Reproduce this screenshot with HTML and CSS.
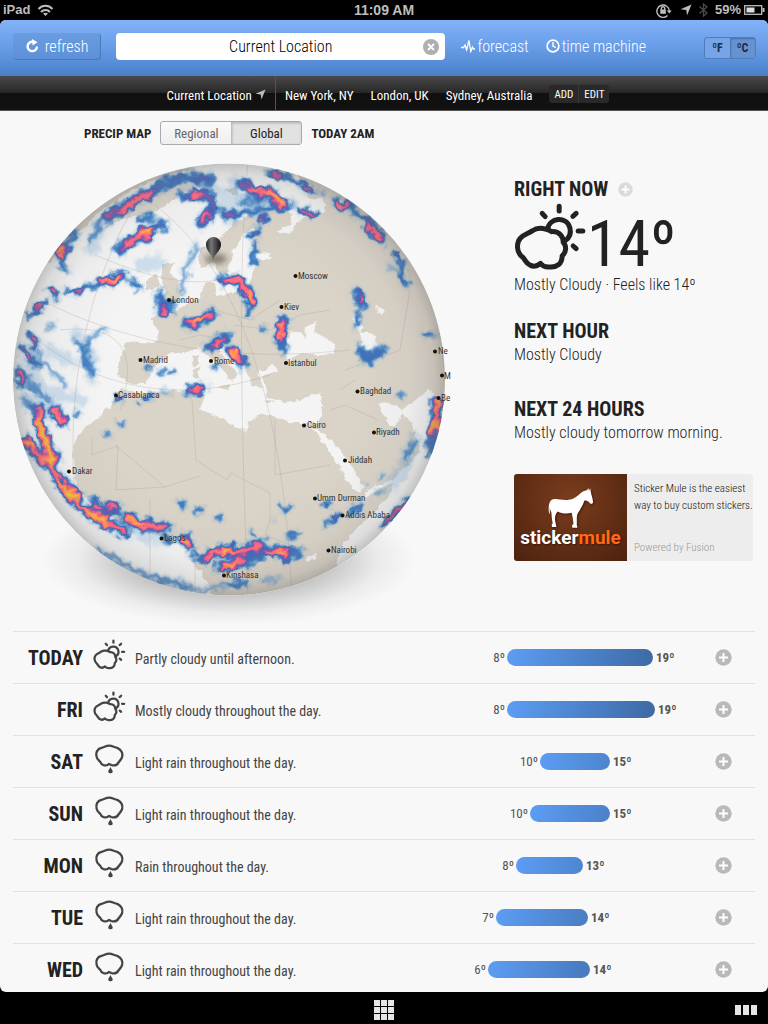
FILE: index.html
```html
<!DOCTYPE html>
<html lang="en">
<head>
<meta charset="utf-8">
<meta name="viewport" content="width=device-width, initial-scale=1">
<title>Forecast</title>
<link rel="stylesheet" href="styles.css">
</head>
<body>
<svg class="sprite" aria-hidden="true">
  <symbol id="partly" viewBox="40 98 218 204">
    <path d="M97 180C112 168 142 176 152 184C176 182 188 200 187 216C199 228 195 248 184 256C184 282 166 292 146 290C134 291 124 286 119 279C108 289 96 289 87 284C76 280 74 270 67 262C44 246 48 216 58 204C68 192 84 190 97 180Z"/>
    <path d="M140 176C146 142 196 136 207 172C212 190 204 204 192 212"/>
    <path d="M175 108v14M124 129l9 10M226 129l-10 9M232 182h14M217 227l9 8"/>
  </symbol>
  <symbol id="rain" viewBox="280 352 96 96">
    <path d="M303 367C311 366 317 360 327 360C337 360 343 366 352 367C366 373 370 386 367 396C364 405 359 407 356 412C351 422 342 423 333 420C329 418 326 415 324 419C316 424 303 422 299 410C294 405 289 402 288 394C285 382 290 370 303 367Z"/>
    <path class="drop" d="M331 426C333 432 338 435 338 440A7 6 0 0 1 324 440C324 435 329 432 331 426Z"/>
  </symbol>
  <symbol id="plus" viewBox="0 0 17 17">
    <circle cx="8.500" cy="8.500" r="8.200" stroke="none"/><path d="M8.500 4v9M4 8.500h9"/>
  </symbol>
  <symbol id="arrow" viewBox="0 0 12 12"><path d="M11.500 .5L7 11.500L6.300 6L.5 5.300Z"/></symbol>
</svg>

<div class="status">
  <span class="status-side">iPad
    <svg width="17" height="13" viewBox="0 0 17 13" fill="none" stroke="currentColor" stroke-width="2"><path d="M1.500 5C5.500 .8 11.500 .8 15.500 5M4 8C6.500 5.200 10.500 5.200 13 8"/><path d="M8.500 12L6 9.600C7.500 8.300 9.500 8.300 11 9.600Z" fill="currentColor" stroke="none"/></svg>
  </span>
  <span>11:09 AM</span>
  <span class="status-side end">
    <svg width="17" height="15" viewBox="0 0 17 15" fill="none" stroke="currentColor" stroke-width="1.400"><path d="M11.500 12.600A6.200 6.200 0 1 1 13.300 8"/><path d="M10.800 7.500h5l-2.500 3z" fill="currentColor" stroke="none"/><rect x="4.300" y="6.500" width="5.500" height="4.300" fill="currentColor" stroke="none"/><path d="M5.300 7V5.500a1.750 1.750 0 0 1 3.500 0V7"/></svg>
    <svg class="nav" width="12" height="12"><use href="#arrow"/></svg>
    <svg width="9" height="14" viewBox="0 0 9 14" fill="none" stroke="#4a4a4a" stroke-width="1.300"><path d="M.5 3.500L8 10L4.500 13V1L8 4L.5 10.500"/></svg>
    <span class="pct">59%</span>
    <svg class="battery" width="21" height="10" viewBox="0 0 21 10"><rect x=".7" y=".7" width="17" height="8.600" fill="none" stroke="currentColor" stroke-width="1.300"/><path d="M18.500 3h2v4h-2z" fill="currentColor"/><path d="M2.500 2.500h8v5h-8z" fill="#ddd"/></svg>
  </span>
</div>

<div class="app">
  <header class="toolbar">
    <button class="refresh" type="button">
      <svg width="13" height="14" viewBox="0 0 13 14"><path d="M7 2.800A4.700 4.700 0 1 0 11 7.500" fill="none" stroke="#fff" stroke-width="2.400"/><path d="M6 0l5.500 3.200L6.500 6.500z" fill="#fff"/></svg>refresh
    </button>
    <div class="search">
      <input type="text" value="Current Location" aria-label="Location">
      <button type="button" aria-label="Clear"><svg width="16" height="16" viewBox="0 0 16 16"><circle cx="8" cy="8" r="8" fill="#afafaf"/><path d="M5 5l6 6M11 5l-6 6" stroke="#fff" stroke-width="1.800"/></svg></button>
    </div>
    <nav class="modes">
      <a href="#forecast"><svg width="14" height="14" viewBox="0 0 14 14" fill="none" stroke="#fff" stroke-width="1.300"><path d="M0 8.500h2.500L4 6l1.600 5L8 1.500l1.800 11L11.500 8l1 2H14"/></svg>forecast</a>
      <a href="#time"><svg width="14" height="14" viewBox="0 0 14 14" fill="none" stroke="#fff"><circle cx="7" cy="7" r="5.900" stroke-width="1.700"/><path d="M7 3v4.200l2.800 1.500" stroke-width="1.400"/></svg>time machine</a>
    </nav>
    <div class="units" role="group" aria-label="Units">
      <button type="button">ºF</button><button type="button" class="on">ºC</button>
    </div>
  </header>

  <nav class="places">
    <a class="here" href="#here">Current Location <svg width="11" height="11"><use href="#arrow"/></svg></a>
    <a href="#ny">New York, NY</a>
    <a href="#london">London, UK</a>
    <a href="#sydney">Sydney, Australia</a>
    <span class="manage"><button type="button">ADD</button><button type="button">EDIT</button></span>
  </nav>

  <main>
    <div class="overview">
      <section class="map">
        <div class="map-head">
          <h2>PRECIP MAP</h2>
          <div class="scope" role="group" aria-label="Map scope"><button type="button">Regional</button><button type="button" class="on">Global</button></div>
          <strong>TODAY 2AM</strong>
        </div>
        <svg class="globe" viewBox="0 150 448 480" role="img" aria-label="Global precipitation map">
          <defs>
            <clipPath id="disc"><circle cx="229" cy="379.500" r="216"/></clipPath>
            <radialGradient id="shade" cx="229" cy="379.500" r="216" gradientUnits="userSpaceOnUse">
              <stop offset=".6" stop-color="#777" stop-opacity="0"/><stop offset=".84" stop-color="#777" stop-opacity=".06"/><stop offset=".95" stop-color="#666" stop-opacity=".17"/><stop offset="1" stop-color="#555" stop-opacity=".32"/>
            </radialGradient>
            <radialGradient id="floor"><stop offset="0" stop-color="#000" stop-opacity=".6"/><stop offset=".55" stop-color="#000" stop-opacity=".26"/><stop offset=".8" stop-color="#000" stop-opacity=".07"/><stop offset="1" stop-color="#000" stop-opacity="0"/></radialGradient>
            <linearGradient id="pin" x2="1"><stop offset="0" stop-color="#222"/><stop offset=".35" stop-color="#777"/><stop offset="1" stop-color="#111"/></linearGradient>
            <filter id="soft" x="-50%" y="-50%" width="200%" height="200%"><feGaussianBlur stdDeviation="3"/></filter>
            <filter id="coast" x="0" y="0" width="1" height="1"><feTurbulence type="fractalNoise" baseFrequency=".13" numOctaves="3" seed="7"/><feDisplacementMap in="SourceGraphic" scale="6" xChannelSelector="R" yChannelSelector="G"/></filter>
            <filter id="radar" filterUnits="userSpaceOnUse" x="0" y="150" width="448" height="460" color-interpolation-filters="sRGB">
              <feGaussianBlur in="SourceGraphic" stdDeviation="1.900" result="b"/>
              <feTurbulence type="fractalNoise" baseFrequency=".11" numOctaves="2" seed="4" result="n"/>
              <feDisplacementMap in="b" in2="n" scale="12" xChannelSelector="R" yChannelSelector="G"/>
              <feColorMatrix values="0 0 0 1 0  0 0 0 1 0  0 0 0 1 0  0 0 0 1 0"/>
              <feComponentTransfer>
                <feFuncR type="table" tableValues=".45 .38 .26 .2 .26 .6 .95 1 1 1 1"/>
                <feFuncG type="table" tableValues=".68 .62 .53 .47 .4 .34 .36 .46 .62 .8 .93"/>
                <feFuncB type="table" tableValues=".86 .83 .78 .75 .72 .64 .55 .45 .3 .18 .15"/>
                <feFuncA type="table" tableValues="0 .25 .65 .9 1 1 1 1 1 1 1"/>
              </feComponentTransfer>
            </filter>
          </defs>
          <ellipse cx="229" cy="560" rx="188" ry="66" fill="url(#floor)" opacity=".75"/>
          <g clip-path="url(#disc)">
            <circle cx="229" cy="379.500" r="217" fill="#f4f4f4"/>
            <g filter="url(#coast)">
              <path class="land" d="M50 262L68 244L82 228L104 208L132 190L165 177L195 169L190 155L90 170L20 260ZM104 230L116 221L147 214L167 205L187 190L213 183L200 178L160 187L110 217ZM163 264L174 262L171 272L178 284L183 296L168 303L160 301L166 290L161 277ZM147 278L157 275L159 286L146 291ZM225 190L240 187L236 196Z"/>
              <path class="land" d="M125 341L155 343L158 330L150 317L168 315L181 306L198 299L206 281L215 283L217 297L238 290L249 285L253 272L258 260L272 258L270 253L256 254L250 244L254 228L244 234L233 256L226 276L218 269L212 262L202 268L197 258L202 249L215 243L235 222L255 211L275 208L292 214L290 226L276 231L290 234L302 218L318 210L305 190L296 173L300 150L460 150V620H200L212 588L195 566L192 548L180 538L162 538L148 530L122 522L96 507L80 492L74 475L73 446L80 432L98 418L112 403L120 389L128 383L117 375Z"/>
              <path class="sea" d="M128 383L145 384L154 368L168 354L186 352L200 349L213 360L226 372L231 382L238 373L222 357L218 346L226 346L236 360L246 370L252 386L262 388L258 373L270 366L280 370L262 376L265 388L268 398L285 402L300 400L321 393L322 416L318 423L290 423L276 418L262 413L248 422L247 431L234 427L221 418L200 409L205 394L190 390L165 391L140 393L120 389Z"/>
              <path class="sea" d="M287 363L286 344L291 331L302 334L306 340L304 330L316 321L314 332L334 343L334 352L318 357L302 352ZM352 319L358 310L360 322L362 332L374 334L378 347L368 355L360 344L362 334ZM376 304L384 311L382 316L377 313ZM312 428L324 434L340 450L352 465L364 490L358 492L345 478L330 452ZM364 492L392 479L420 452L412 421L403 413L397 424L389 425L377 403L388 402L402 410L408 405L430 390L442 410L460 440L440 520L350 590L336 562L346 540L366 520L388 498L394 483L364 497ZM322 197L326 210L322 214L310 201ZM231 252L240 243L243 248L236 258ZM305 559L317 553L316 558L307 562Z"/>
              <path class="land" d="M192 357L198 355L198 364L193 368ZM194 369L200 367L198 378L192 376ZM216 388L230 385L226 391ZM265 400L276 401L268 403ZM305 395L314 391L312 396ZM440 405L450 400V435H442Z"/>
            </g>
            <path class="lines" d="M155 205Q280 300 292 600M248 163Q235 280 248 600M140 195Q60 330 75 500M40 300Q180 370 350 350M60 330Q150 320 120 410M25 330Q130 420 270 375M95 255Q200 300 240 270M150 500V575M195 545V595M192 400L196 460L227 480L231 473L270 493V520M275 420V475L330 465M115 445L165 487L116 490L118 446L92 455V437M165 487L200 476M330 410L345 405L378 420M340 390L355 380M235 325L270 330L300 315L330 310M180 340L200 335L230 340M215 310L250 320L280 300M345 370L400 350L410 290M270 520L265 535L290 545"/>
            <g filter="url(#radar)" fill="none" stroke="#000" stroke-linecap="round" stroke-linejoin="round">
              <g stroke-opacity=".1" stroke-width="14"><path d="M75 335L90 350L92 378M50 350L70 362M25 350L40 390L80 400M92 250L98 230L112 215M235 180L230 215L255 195L290 205M140 265L160 262M25 400L60 415M200 180L225 195L232 220M130 518L145 537L165 540M415 440L402 470L392 485M70 545L140 580L190 588"/></g>
              <g stroke-opacity=".26" stroke-width="5"><path d="M48 328L55 325M28 335L44 362L65 385M75 340L86 352L92 375M90 338L82 360L93 372M105 328L92 338M15 370L28 378L35 392M100 550L130 567L160 579L190 588M28 385L40 395L50 400M413 440L406 460M90 240L100 222L110 214M182 292L184 275L196 245M205 190L215 205L235 220M70 540L90 553M378 478L382 475M375 495L382 491M240 200L262 204M24 400L34 412"/></g>
              <g stroke-opacity=".37" stroke-width="11"><path d="M109 216L125 206L145 195L165 184L185 177L208 179M182 196L206 195L213 208L200 224M120 250L128 243L142 234L162 225M123 243L145 237M60 255L66 246M52 290L55 294M105 281L123 277M160 295L160 308L165 313L170 303M186 325L200 322L211 314M222 279L238 281L248 292L252 300M208 346L220 342L226 335M232 351L243 364M190 391L202 388M242 183L256 193L272 194L280 202L286 206M368 221L380 238M361 351L369 360L382 350M283 320L279 338L284 348M38 410L41 430L49 450L52 464M25 440L38 456L53 468L62 487L80 506L100 520L126 533M55 409L62 422M70 488L78 499M94 503L106 514M110 506L115 508M124 517L140 524L166 527M183 536L189 544M204 560L215 552L230 550L245 552L262 544M220 567L230 563L245 562L265 552L290 551L298 553M435 400L437 418L432 437L430 450M338 202L342 206M356 293L363 304"/></g>
              <g stroke-opacity=".4" stroke-width="6"><path d="M72 240L78 231M28 316L44 303M68 292L82 290L105 281M132 282L140 288M252 304L248 315M268 173L285 176L310 189M298 211L315 214M225 216L250 212L280 208M258 221L266 219M248 238L258 230M256 245L252 254L254 264M346 205L364 218M394 254L402 264L406 285M359 313L357 326M22 348L38 365M18 368L22 388M30 336L38 342M116 401L120 397M142 400L150 397M230 585L248 583M327 524L337 516M382 526L395 515L408 499M138 220L152 217M60 263L68 270M148 368h1M162 371h1M172 372h1M76 414h1M121 424h1M107 434h1M178 503L184 507M197 509L202 512M217 517h3M262 330h1M288 536L296 534M253 534h1M283 509L290 507M326 505h1M350 512L360 505M400 395h1M56 450L58 462M216 365L218 367M165 538L172 540M193 554L196 556"/></g>
              <g stroke-opacity=".33" stroke-width="3"><path d="M422 334h2M428 333L438 338M274 520h1M260 582L280 578M195 590L225 587M250 190L240 178M316 192L325 193M188 392h1M160 392h10M388 265L404 280M365 484v4M205 590L225 586"/></g>
              <g stroke-opacity=".68" stroke-width="5"><path d="M120 210L136 201L152 193M190 196L202 195M207 212L203 221M124 247L138 237L152 230M60 254L64 247M52 290L54 292M100 282L122 277M164 310L166 312M190 323L200 321L210 314M224 280L238 281L247 291L252 300M214 345L222 341M232 350L241 361M193 390L201 388M252 190L270 192L279 199L284 206M340 203L344 207M368 226L381 239M282 322L279 338M38 410L41 430L49 450L52 464M26 440L38 454L53 468L62 487L80 506L100 520L126 533M53 409L62 421M71 489L77 498M95 504L100 507M110 506L115 508M106 516h1M124 517L140 524L165 527M183 537L189 545M205 560L216 552L230 551L245 551L260 545M222 569L230 564L243 561M268 554L288 551M435 400L437 418L433 434"/></g>
              <g stroke-opacity=".62" stroke-width="4"><path d="M76 291L82 289M273 173L279 175M305 187L310 188M302 212L313 213M260 221L265 220M395 255h1M361 295L364 302M284 559L287 562M386 522L405 503M33 340L36 345M26 352L30 358M19 372L21 382M143 399h5M36 309L44 304M255 233h1M327 505h1M335 516h1M426 334h1M116 400L119 399"/></g>
              <g stroke-opacity=".8" stroke-width="5"><path d="M145 231L150 229M60 253L62 249M112 279L119 277M195 321L202 319M249 295L251 299M232 352L234 354M268 192L279 199L282 204M281 324h1M279 338h1M39 418L41 433L48 448L50 461M26 440L29 446M60 483L68 493M73 492L77 497M85 510L95 517L108 523M128 519L142 525M184 541L188 543M222 550L230 551M227 565L234 563M277 553L284 552M436 401L437 407M437 424L434 431"/></g>
              <g stroke-opacity=".9" stroke-width="4"><path d="M147 230h2M39 422L42 436L49 452M95 518L106 523M224 549h2"/></g>
            </g>
            <circle cx="229" cy="379.500" r="216" fill="url(#shade)"/>
          </g>
          <ellipse cx="216" cy="259" rx="11" ry="5" fill="#443c30" opacity=".6" filter="url(#soft)"/>
          <path d="M213 260C212 254 206 251 206 244.500A7.400 7.400 0 0 1 221 244.500C221 251 214.500 254 213 260Z" fill="url(#pin)"/>
          <g class="cities">
            <circle cx="295.500" cy="276" r="2"/><text x="298" y="279">Moscow</text>
            <circle cx="169" cy="300" r="2"/><text x="172" y="303">London</text>
            <circle cx="281.500" cy="307" r="2"/><text x="284" y="310">Kiev</text>
            <circle cx="140.500" cy="360" r="2"/><text x="143" y="363">Madrid</text>
            <circle cx="211" cy="361" r="2"/><text x="214" y="364">Rome</text>
            <circle cx="286" cy="363" r="2"/><text x="288" y="366">Istanbul</text>
            <circle cx="435" cy="351.500" r="2"/><text x="438" y="354">Ne</text>
            <circle cx="442" cy="375.500" r="2"/><text x="444" y="379">M</text>
            <circle cx="438.500" cy="398" r="2"/><text x="441" y="401">Be</text>
            <circle cx="116" cy="395.500" r="2"/><text x="118" y="398">Casablanca</text>
            <circle cx="357.500" cy="391.500" r="2"/><text x="360" y="394">Baghdad</text>
            <circle cx="304" cy="425.500" r="2"/><text x="307" y="428">Cairo</text>
            <circle cx="374" cy="432.500" r="2"/><text x="376" y="435">Riyadh</text>
            <circle cx="345" cy="460.500" r="2"/><text x="348" y="463">Jiddah</text>
            <circle cx="69" cy="471.500" r="2"/><text x="72" y="474">Dakar</text>
            <circle cx="315" cy="498.500" r="2"/><text x="317" y="501">Umm Durman</text>
            <circle cx="342.500" cy="515.500" r="2"/><text x="345" y="518">Addis Ababa</text>
            <circle cx="161.500" cy="538.500" r="2"/><text x="164" y="541">Lagos</text>
            <circle cx="328.500" cy="550.500" r="2"/><text x="331" y="553">Nairobi</text>
            <circle cx="224" cy="575.500" r="2"/><text x="226" y="578">Kinshasa</text>
          </g>
        </svg>
      </section>

      <aside class="summary">
        <section class="now">
          <h2>RIGHT NOW <button type="button" class="more faint" aria-label="More detail"><svg width="15" height="15"><use href="#plus"/></svg></button></h2>
          <div class="reading"><svg class="icon" width="73" height="68"><use href="#partly"/></svg><span>14º</span></div>
          <p>Mostly Cloudy · Feels like 14º</p>
        </section>
        <section class="hour"><h2>NEXT HOUR</h2><p>Mostly Cloudy</p></section>
        <section class="day24"><h2>NEXT 24 HOURS</h2><p>Mostly cloudy tomorrow morning.</p></section>
        <a class="ad" href="#sponsor">
          <span class="brand">
            <svg width="46" height="40" viewBox="148 70 134 118" aria-hidden="true"><path fill="#fff" d="M160 104C175 99 190 109 212 104C226 102 236 91 246 83C252 79 257 78 262 77L266 70L268 78L272 71L273 80C275 90 280 102 280 112C279 118 271 118 269 112C262 107 256 106 254 108C250 120 242 134 236 143C230 152 233 166 232 178L234 187H219L218 180L222 177C222 164 219 154 217 143C201 147 187 145 176 139C169 146 167 154 168 166L172 185H159L158 178L161 174C158 160 158 150 157 142C152 132 151 120 154 114C150 124 155 140 151 148C147 132 149 108 160 104Z"/></svg>
            <b>sticker<em>mule</em></b>
          </span>
          <span class="pitch"><span>Sticker Mule is the easiest<br>way to buy custom stickers.</span><small>Powered by Fusion</small></span>
        </a>
      </aside>
    </div>

    <ul class="week">
      <li><h3>TODAY</h3><svg class="icon"><use href="#partly"/></svg><p>Partly cloudy until afternoon.</p><div class="range"><span style="width:22.8%">8º</span><i style="width:58.4%"></i><b>19º</b></div><button type="button" class="more" aria-label="Today detail"><svg width="17" height="17"><use href="#plus"/></svg></button></li>
      <li><h3>FRI</h3><svg class="icon"><use href="#partly"/></svg><p>Mostly cloudy throughout the day.</p><div class="range"><span style="width:22.8%">8º</span><i style="width:59.2%"></i><b>19º</b></div><button type="button" class="more" aria-label="Friday detail"><svg width="17" height="17"><use href="#plus"/></svg></button></li>
      <li><h3>SAT</h3><svg class="icon wet"><use href="#rain"/></svg><p>Light rain throughout the day.</p><div class="range"><span style="width:36%">10º</span><i style="width:28%"></i><b>15º</b></div><button type="button" class="more" aria-label="Saturday detail"><svg width="17" height="17"><use href="#plus"/></svg></button></li>
      <li><h3>SUN</h3><svg class="icon wet"><use href="#rain"/></svg><p>Light rain throughout the day.</p><div class="range"><span style="width:32%">10º</span><i style="width:32%"></i><b>15º</b></div><button type="button" class="more" aria-label="Sunday detail"><svg width="17" height="17"><use href="#plus"/></svg></button></li>
      <li><h3>MON</h3><svg class="icon wet"><use href="#rain"/></svg><p>Rain throughout the day.</p><div class="range"><span style="width:26.4%">8º</span><i style="width:26.8%"></i><b>13º</b></div><button type="button" class="more" aria-label="Monday detail"><svg width="17" height="17"><use href="#plus"/></svg></button></li>
      <li><h3>TUE</h3><svg class="icon wet"><use href="#rain"/></svg><p>Light rain throughout the day.</p><div class="range"><span style="width:18.4%">7º</span><i style="width:36.8%"></i><b>14º</b></div><button type="button" class="more" aria-label="Tuesday detail"><svg width="17" height="17"><use href="#plus"/></svg></button></li>
      <li><h3>WED</h3><svg class="icon wet"><use href="#rain"/></svg><p>Light rain throughout the day.</p><div class="range"><span style="width:15.2%">6º</span><i style="width:40.8%"></i><b>14º</b></div><button type="button" class="more" aria-label="Wednesday detail"><svg width="17" height="17"><use href="#plus"/></svg></button></li>
    </ul>
  </main>
</div>

<footer class="dock">
  <button type="button" aria-label="Grid"><svg width="20" height="20" viewBox="0 0 20 20"><path d="M0 0h6v6H0zM7 0h6v6H7zM14 0h6v6h-6zM0 7h6v6H0zM7 7h6v6H7zM14 7h6v6h-6zM0 14h6v6H0zM7 14h6v6H7zM14 14h6v6h-6z"/></svg></button>
  <button type="button" class="tabs" aria-label="Tabs"><svg width="22" height="10" viewBox="0 0 22 10"><path d="M0 0h6v10H0zM8 0h6v10H8zM16 0h6v10h-6z"/></svg></button>
</footer>
</body>
</html>
```
FILE: styles.css
```css
* { box-sizing: border-box; }
body, h2, h3, p, ul { margin: 0; padding: 0; }
body {
  min-height: 100vh;
  display: flex;
  flex-direction: column;
  background: #000;
  color: #222;
  font-family: "Avenir Next Condensed", "Roboto Condensed", "Open Sans Condensed", "Liberation Sans", sans-serif;
  font-size: 16px;
  font-weight: 300;
}
button, input { font: inherit; color: inherit; margin: 0; padding: 0; border: 0; background: none; }
a { color: inherit; text-decoration: none; }
svg { display: block; flex: none; }
.sprite { position: absolute; width: 0; height: 0; }

.status {
  display: grid;
  grid-template-columns: 1fr auto 1fr;
  align-items: center;
  height: 20px;
  padding: 0 3px;
  color: #bebebe;
  font: bold 14px/20px "Liberation Sans", Arial, sans-serif;
}
.status-side { display: flex; align-items: center; gap: 7px; font-size: 13px; }
.status-side.end { justify-content: flex-end; }
.status .pct { margin-right: -4px; }
.nav { fill: #bebebe; }

.app { flex: 1; border-radius: 6px; overflow: hidden; background: #f8f8f8; }

.toolbar {
  display: flex;
  align-items: center;
  height: 56px;
  padding: 0 12px 4px 13px;
  background: linear-gradient(#82b2f8, #6a9ee9 45%, #4b80c9);
  color: #fff;
}
.refresh {
  display: flex;
  align-items: center;
  justify-content: center;
  gap: 6px;
  width: 88px;
  height: 27px;
  margin-right: 15px;
  border-radius: 4px;
  background: linear-gradient(#6a9ce2, #5c90d8);
  box-shadow: inset -1px -1px 1px #4a79bb;
}
.search { position: relative; flex: 1; }
.search input {
  display: block;
  width: 100%;
  height: 27px;
  border-radius: 4px;
  background: #fff;
  color: #000;
  text-align: center;
}
.search button { position: absolute; right: 6px; top: 6px; }
.modes { display: flex; gap: 17px; margin: 0 58px 0 16px; }
.modes a { display: flex; align-items: center; gap: 2px; white-space: nowrap; }
.units {
  display: flex;
  width: 52px;
  height: 22px;
  margin-top: 4px;
  border: 1px solid #4e7cbd;
  border-radius: 3px;
  background: #76a4e6;
  color: #1d2b40;
  font-weight: bold;
  font-size: 12px;
}
.units button { flex: 1; }
.units .on { background: #6792d0; box-shadow: inset 1px 1px 2px #4770ab; }

.places {
  display: flex;
  justify-content: center;
  height: 35px;
  padding-left: 8px;
  border-bottom: 1px solid #555;
  background: linear-gradient(#4a4a4a, #262626 51%, #101010 51%, #121212);
  color: #fff;
  font-size: 13px;
  font-weight: 400;
  line-height: 39px;
}
.places a { height: 34px; margin-right: 17px; white-space: nowrap; }
.places .here {
  display: flex;
  align-items: flex-start;
  gap: 3px;
  padding-right: 9px;
  margin-right: 9px;
  border-right: 1px solid #555;
}
.here svg { fill: #bbb; margin-top: 13px; }
.manage {
  display: flex;
  align-self: flex-start;
  height: 18px;
  margin-top: 9px;
  border-radius: 3px;
  background: #292929;
  font-size: 11px;
  line-height: 20px;
}
.manage button { padding: 0 5px; }
.manage button + button { border-left: 1px solid #3a3a3a; }

.overview { display: grid; grid-template-columns: minmax(0, 448fr) minmax(0, 320fr); height: 520px; }
.map { display: flex; flex-direction: column; }
.map-head {
  display: flex;
  align-items: center;
  gap: 9px;
  height: 39px;
  padding: 5px 0 0 84px;
  white-space: nowrap;
}
.map-head h2, .map-head strong { font-size: 13px; font-weight: bold; }
.scope {
  display: flex;
  width: 142px;
  height: 24px;
  border: 1px solid #aaa;
  border-radius: 3px;
  font-size: 13px;
  font-weight: 400;
  background: linear-gradient(#fafafa, #eee);
}
.scope button { flex: 1; color: #666; }
.scope .on { color: #222; background: #e2e2e2; box-shadow: inset 1px 1px 3px #aaa; }
.globe { width: 100%; height: auto; overflow: visible; }
.land { fill: #dad3c8; }
.sea { fill: #f4f4f4; }
.lines { fill: none; stroke: #a49c8e; stroke-opacity: .28; stroke-width: 1; }
.cities { font-size: 9px; font-weight: 400; fill: #333; }
.cities circle { fill: #111; }

.summary { padding: 67px 15px 0 66px; line-height: 20px; }
.summary h2 { font-size: 20px; line-height: 22px; }
.summary p { white-space: nowrap; }
.now h2 { display: flex; align-items: center; gap: 10px; }
.more svg { fill: #b9b9b9; stroke: #fff; stroke-width: 2; }
.more.faint svg { fill: #dadada; }
.reading { display: flex; align-items: flex-start; height: 75px; }
.reading span { margin-top: 13px; font-size: 64px; line-height: 64px; font-weight: 400; }
.icon { fill: none; stroke: #333; stroke-width: 15; stroke-linecap: round; stroke-linejoin: round; }
.reading .icon { stroke: #222; margin-top: 3px; }
.hour { margin-top: 22px; }
.day24 { margin-top: 30px; }
.hour h2, .day24 h2 { line-height: 28px; }

.ad {
  display: flex;
  height: 87px;
  margin-top: 31px;
  border-radius: 3px;
  overflow: hidden;
  background: #ededed;
}
.brand {
  display: flex;
  flex-direction: column;
  align-items: center;
  justify-content: flex-end;
  flex: none;
  width: 113px;
  padding-bottom: 11px;
  background: radial-gradient(circle at 50% 30%, #7b3d1d, #4c220f);
}
.brand svg { margin-bottom: -2px; filter: drop-shadow(1px 1px 1px #3009); }
.brand b { font: bold 19px/24px Roboto, sans-serif; color: #fff; text-shadow: 1px 1px 2px #3009; }
.brand em { font-style: normal; color: #ff6a13; }
.pitch {
  display: flex;
  flex-direction: column;
  justify-content: space-between;
  padding: 6px 0 5px 7px;
  color: #111;
  font-size: 11px;
  line-height: 17px;
  white-space: nowrap;
}
.pitch small { font-size: 11px; color: #999; }

.week { list-style: none; margin: 0 13px; }
.week li {
  display: grid;
  grid-template-columns: 70px 33px minmax(0, 1fr) 250px 17px;
  align-items: center;
  height: 52px;
  padding-right: 23px;
  border-top: 1px solid #e2e2e2;
}
.week li:last-child { margin-bottom: -3px; }
.week h3 { font-size: 20px; text-align: right; }
.week .icon { width: 33px; height: 31px; margin: -6px 0 0 10px; stroke: #444; }
.week .wet { stroke-width: 7px; }
.drop { fill: #444; stroke: none; }
.week p { margin: 2px 0 0 19px; color: #444; font-size: 14px; font-weight: 400; white-space: nowrap; }
.week .range { display: flex; align-items: center; margin-left: -15px; width: 250px; font-size: 13px; font-weight: 400; color: #555; }
.range span { padding-right: 2px; text-align: right; white-space: nowrap; }
.range i { flex: none; height: 17px; border-radius: 9px; background: linear-gradient(100deg, #5c9df4, #3d68a2 152px); }
.range b { padding-left: 3px; }

.dock { display: grid; grid-template-columns: 1fr auto 1fr; align-items: center; height: 32px; padding: 3px 11px 0; }
.dock svg { fill: #e6e6e6; }
.dock button:first-child { grid-column: 2; }
.dock .tabs { justify-self: end; }
```
